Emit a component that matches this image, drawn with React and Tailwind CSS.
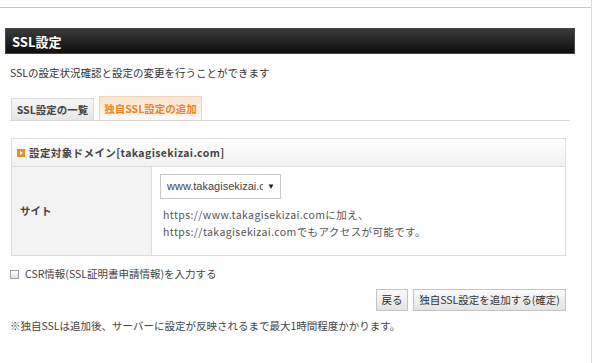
export default function App() {
  return (
    <div className="flex h-[363px] w-[600px] overflow-hidden bg-white font-['Noto_Sans_CJK_JP',sans-serif] text-[#333]">
      <div className="w-[592px] shrink-0 border-r border-[#dcdcdc] pt-[7px]">
        <div className="border-t border-[#c8c8c8] pl-[5px] pr-[16px] pt-[20px]">
          {/* title bar */}
          <div className="flex h-[26px] items-center border border-[#444] bg-gradient-to-b from-[#3c3c3c] to-[#0e0e0e] pl-[6px]">
            <span className="text-[13px] font-bold leading-none text-white">SSL設定</span>
          </div>

          <div className="px-[5px]">
            <p className="mt-[12px] text-[10.5px] leading-[14px]">
              SSLの設定状況確認と設定の変更を行うことができます
            </p>

            {/* tabs */}
            <div className="mt-[16px] flex items-end gap-[5px] border-b border-[#d8d8d8] pl-[1px]">
              <div className="flex h-[22px] w-[83px] items-center justify-center border border-b-0 border-[#dadada] bg-gradient-to-b from-[#f7f7f7] to-[#e6e6e6] text-[10.5px] font-bold text-[#444]">
                SSL設定の一覧
              </div>
              <div className="flex h-[24px] w-[103px] items-center justify-center border border-b-0 border-[#ecd6c2] bg-gradient-to-b from-[#fde3cc] to-[#fffaf5] text-[10.5px] font-bold text-[#f08224]">
                独自SSL設定の追加
              </div>
            </div>

            {/* domain panel */}
            <div className="ml-[1px] mr-[4px] mt-[17px] border border-[#dedede]">
              <div className="flex h-[28px] items-center gap-[4px] border-b border-[#dedede] bg-gradient-to-b from-white to-[#f1f1f1] pl-[5px]">
                <span className="flex h-[8px] w-[8px] items-center justify-center bg-[#f08a24]">
                  <span className="h-0 w-0 border-y-[2.5px] border-l-[3px] border-y-transparent border-l-white" />
                </span>
                <span className="text-[10.5px] font-bold tracking-[0.4px] text-[#444]">設定対象ドメイン[takagisekizai.com]</span>
              </div>
              <div className="flex h-[88px]">
                <div className="flex w-[140px] items-center border-r border-[#dedede] bg-[#f3f3f3] pl-[8px] text-[10.5px] font-bold text-[#444]">
                  サイト
                </div>
                <div className="flex-1 pl-[8px] pt-[7px]">
                  <div className="flex h-[25px] w-[121px] items-center border border-[#c9c9c9] bg-white pl-[6px] pr-[5px] font-['Liberation_Sans',sans-serif] text-[11px] text-[#444]">
                    <span className="flex-1 overflow-hidden whitespace-nowrap">www.takagisekizai.com</span>
                    <span className="ml-[4px] text-[8px] text-[#222]">▼</span>
                  </div>
                  <div className="mt-[7px] pl-[3px] text-[10.5px] leading-[17px] tracking-[0.4px] text-[#555]">
                    <div>https://www.takagisekizai.comに加え、</div>
                    <div>https://takagisekizai.comでもアクセスが可能です。</div>
                  </div>
                </div>
              </div>
            </div>

            {/* csr */}
            <label className="mt-[11px] flex items-center gap-[6px] text-[10.5px] leading-[14px] text-[#444]">
              <span className="h-[9px] w-[9px] border border-[#a0a0a0] bg-gradient-to-b from-white to-[#e2e2e2]" />
              CSR情報(SSL証明書申請情報)を入力する
            </label>

            {/* buttons */}
            <div className="mr-[4px] mt-[8px] flex justify-end gap-[5px]">
              <button className="h-[22px] w-[32px] border border-[#c4c4c4] bg-gradient-to-b from-[#fafafa] to-[#e3e3e3] text-[10.5px] text-[#333]">
                戻る
              </button>
              <button className="h-[22px] w-[153px] border border-[#c4c4c4] bg-gradient-to-b from-[#fafafa] to-[#e3e3e3] text-[10.5px] text-[#333]">
                独自SSL設定を追加する(確定)
              </button>
            </div>

            <p className="mt-[8px] text-[10.5px] leading-[14px] text-[#444]">
              ※独自SSLは追加後、サーバーに設定が反映されるまで最大1時間程度かかります。
            </p>
          </div>
        </div>
      </div>
    </div>
  );
}
